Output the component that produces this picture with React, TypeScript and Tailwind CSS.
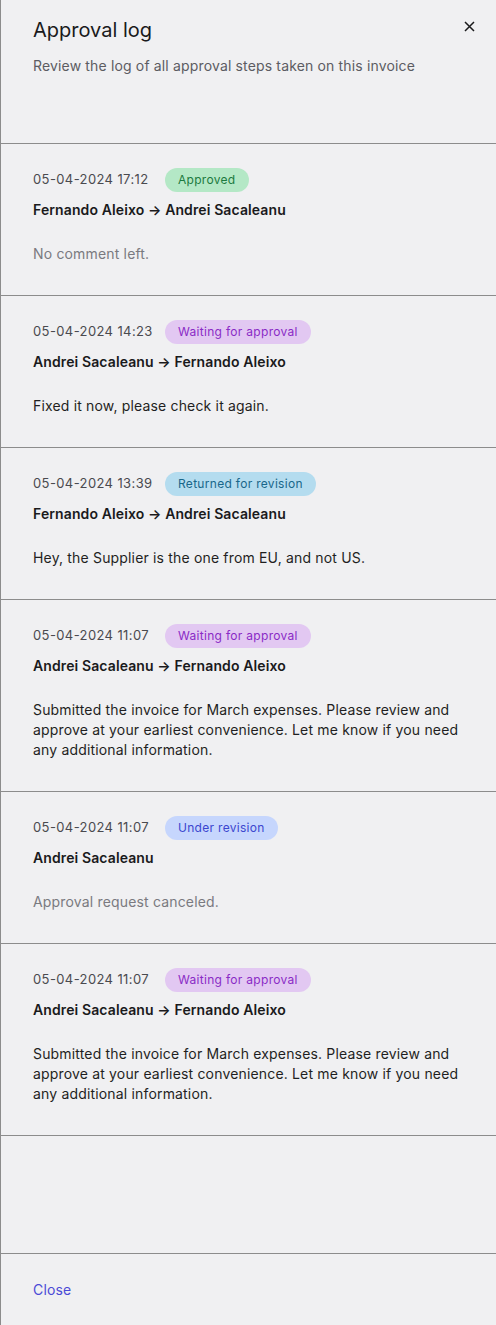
import React from 'react';

type Status = 'approved' | 'waiting' | 'returned' | 'revision';

type LogEntry = {
  date: string;
  status: Status;
  from: string;
  to?: string;
  comment: string;
  muted?: boolean;
};

const badgeStyles: Record<Status, { label: string; className: string }> = {
  approved: { label: 'Approved', className: 'bg-[#b4e8c6] text-[#1c7a3e]' },
  waiting: { label: 'Waiting for approval', className: 'bg-[#e2c8f2] text-[#8a2bc6]' },
  returned: { label: 'Returned for revision', className: 'bg-[#b4dcef] text-[#19678a]' },
  revision: { label: 'Under revision', className: 'bg-[#c6d6fd] text-[#3b46cf]' },
};

const submitted =
  'Submitted the invoice for March expenses. Please review and approve at your earliest convenience. Let me know if you need any additional information.';

const entries: LogEntry[] = [
  { date: '05-04-2024 17:12', status: 'approved', from: 'Fernando Aleixo', to: 'Andrei Sacaleanu', comment: 'No comment left.', muted: true },
  { date: '05-04-2024 14:23', status: 'waiting', from: 'Andrei Sacaleanu', to: 'Fernando Aleixo', comment: 'Fixed it now, please check it again.' },
  { date: '05-04-2024 13:39', status: 'returned', from: 'Fernando Aleixo', to: 'Andrei Sacaleanu', comment: 'Hey, the Supplier is the one from EU, and not US.' },
  { date: '05-04-2024 11:07', status: 'waiting', from: 'Andrei Sacaleanu', to: 'Fernando Aleixo', comment: submitted },
  { date: '05-04-2024 11:07', status: 'revision', from: 'Andrei Sacaleanu', comment: 'Approval request canceled.', muted: true },
  { date: '05-04-2024 11:07', status: 'waiting', from: 'Andrei Sacaleanu', to: 'Fernando Aleixo', comment: submitted },
];

const LogItem: React.FC<{ entry: LogEntry }> = ({ entry }) => {
  const badge = badgeStyles[entry.status];
  return (
    <div className="border-t border-[#8c8c8c] pl-8 pr-8 pt-6 pb-[31px]">
      <div className="flex h-6 items-center gap-4">
        <span className="w-[116px] shrink-0 whitespace-nowrap text-[13px] tracking-[0.03em] text-[#4a4a4f]">
          {entry.date}
        </span>
        <span className={`flex h-6 items-center rounded-full px-[13px] text-xs tracking-[0.025em] ${badge.className}`}>
          {badge.label}
        </span>
      </div>
      <div className="mt-2 text-sm leading-5 font-semibold tracking-[0.008em] text-[#1a1a1c]">
        {entry.from}
        {entry.to && <> → {entry.to}</>}
      </div>
      <p
        className={`mt-6 text-sm leading-5 tracking-[0.012em] ${entry.muted ? 'text-[#7a7a80]' : 'text-[#1f1f22]'}`}
      >
        {entry.comment}
      </p>
    </div>
  );
};

const App: React.FC = () => {
  return (
    <div
      className="flex min-h-[1325px] w-[496px] flex-col border-l border-[#8c8c8c] bg-[#f0f0f2]"
      style={{ fontFamily: 'Inter, "Noto Sans", sans-serif' }}
    >
      <div className="relative h-[143px] pl-8 pr-8 pt-[18px]">
        <h2 className="text-xl leading-6 text-[#1a1a1c]">Approval log</h2>
        <p className="mt-[14px] text-sm leading-5 tracking-[0.011em] text-[#5c5c62]">
          Review the log of all approval steps taken on this invoice
        </p>
        <button className="absolute right-[21px] top-[20px] flex h-3 w-3 items-center justify-center text-[#1a1a1c]">
          <svg width="11" height="11" viewBox="0 0 11 11" fill="none" stroke="currentColor" strokeWidth="1.5">
            <path d="M1 1l9 9M10 1l-9 9" />
          </svg>
        </button>
      </div>

      {entries.map((entry, i) => (
        <LogItem key={i} entry={entry} />
      ))}

      <div className="h-[118px] border-t border-[#8c8c8c]" />

      <div className="flex flex-1 items-center border-t border-[#8c8c8c] pl-8">
        <button className="text-sm tracking-[0.012em] text-[#4b4bd6]">Close</button>
      </div>
    </div>
  );
};

export default App;
